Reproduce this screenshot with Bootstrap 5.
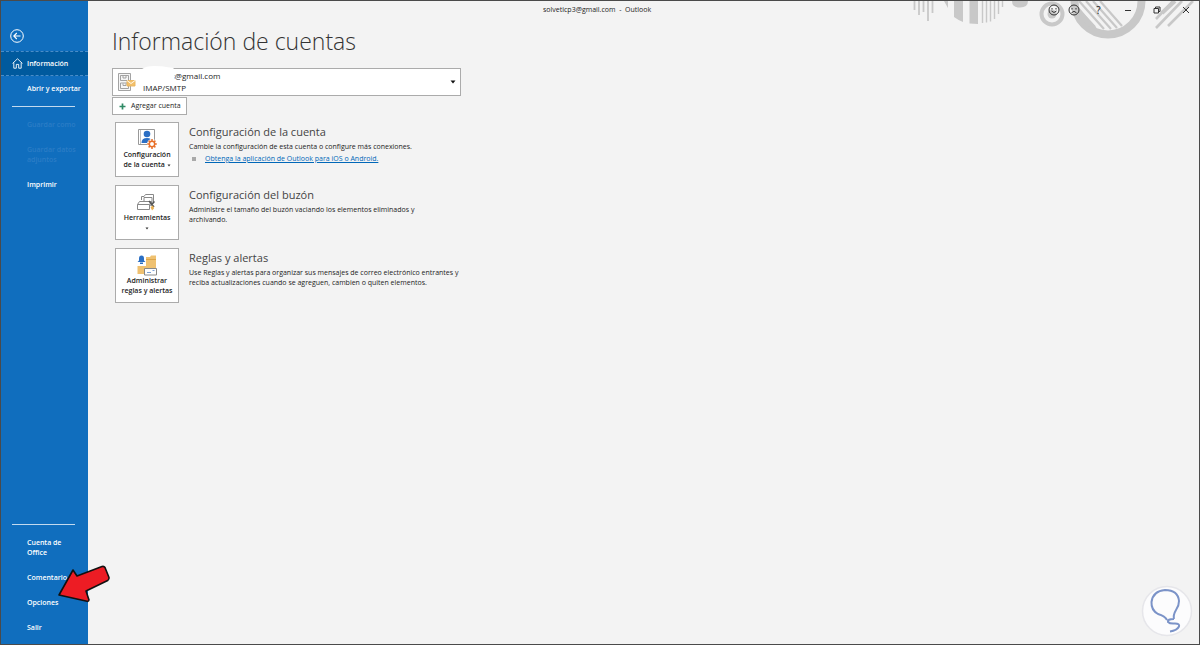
<!DOCTYPE html>
<html lang="es">
<head>
<meta charset="utf-8">
<meta name="viewport" content="width=device-width, initial-scale=1">
<title>Outlook - Información de cuentas</title>
<link href="https://cdn.jsdelivr.net/npm/bootstrap@5.3.0/dist/css/bootstrap.min.css" rel="stylesheet">
<style>
  body { font-family: "Open Sans", "Noto Sans", sans-serif; font-size: 7px; line-height: 10px; color: #1c1c1c; background: #f3f3f3; }
  .app { border: 1px solid #4a4a4a; }
  button { font: inherit; color: inherit; }
  .side { width: 87px; flex: none; background: #106ebe; padding-bottom: 4px; font-weight: 600; }
  .side-link { min-height: 25px; padding-left: 26px; color: #fff; text-decoration: none; white-space: nowrap; }
  .side-link.two-lines { min-height: 35px; }
  .side-link.active { background: #005a9e; border: 1px dashed #4a8dc8; border-width: 1px 0; }
  .side-link.active svg { position: absolute; left: 11px; }
  .side-link.disabled { color: #2b7dc6; pointer-events: none; }
  .side-rule { width: 63px; margin: 5px 0 5px 11px; border-top: 1px solid #fff; opacity: .75; }
  .back { width: 14px; height: 14px; margin: 28px 0 8px 9px; background: none; border: 0; color: #fff; }
  .art { top: 0; right: 0; z-index: 0; }
  .titlebar { height: 18px; z-index: 1; }
  .caption-text { left: 455px; font-weight: 500; }
  .win { gap: 8px; padding-right: 3px; }
  .win button { height: 18px; padding: 0; border: 0; background: none; }
  .w-face { width: 12px; }
  .w-std { width: 21px; }
  .w-help { font-size: 10px; }
  .content { padding: 6px 24px 20px; max-width: 422px; }
  .page-title { font-size: 23px; line-height: 32px; font-weight: 300; margin: 0 0 11px; color: #333; white-space: nowrap; }
  .account { height: 28px; padding: 0 4px; background: #fff; border: 1px solid #ababab; width: 349px; text-align: left; }
  .account-text { font-size: 8px; line-height: 12px; margin-left: 7px; }
  .account-mail { padding-left: 28px; }
  .smudge { left: 29px; top: -3px; z-index: 2; }
  .add { height: 18px; margin-top: 1px; padding: 0 4px 0 6px; gap: 5px; background: #fff; border: 1px solid #ababab; width: 75px; white-space: nowrap; }
  .tiles { padding: 7px 0 0 3px; gap: 8px; }
  .tile { width: 64px; height: 55px; flex: none; padding: 6px 0 0; background: #fff; border: 1px solid #ababab; font-weight: 600; }
  .tile span { white-space: nowrap; }
  .tile-text { margin-left: 10px; }
  .row-title { font-size: 11px; line-height: 14px; margin: 3px 0; font-weight: 400; color: #444; }
  .row-text { white-space: nowrap; }
  .row-link { padding-top: 2px; }
  .bullet { width: 4px; height: 4px; background: #a9a9a9; margin: 0 9px 0 3px; }
  .row-text a { color: #0067b8; }
  .pointer { left: 56px; top: -26px; z-index: 5; pointer-events: none; }
  .bulb { right: 6px; bottom: 7px; width: 52px; height: 52px; }
</style>
</head>
<body>
<div class="app d-flex min-vh-100 position-relative overflow-hidden">
  <nav class="side d-flex flex-column position-relative z-1" aria-label="Archivo">
    <button class="back p-0" aria-label="Atrás">
      <svg class="d-block" width="14" height="14" viewBox="0 0 14 14" fill="none" stroke="currentColor"><circle cx="7" cy="7" r="6.3"/><path d="M10.500 7H4M6.800 4 3.800 7l3 3" stroke-width="1.100"/></svg>
    </button>
    <a class="side-link active d-flex align-items-center position-relative" href="#">
      <svg width="11" height="11" viewBox="0 0 11 11" fill="none" stroke="#fff" stroke-width=".9"><path d="M.6 5.400 5.500.8l4.900 4.600M1.800 4.600v5.600h2.500V6.400h2.400v3.800h2.500V4.600"/></svg>
      Información</a>
    <a class="side-link d-flex align-items-center" href="#">Abrir y exportar</a>
    <div class="side-rule"></div>
    <a class="side-link disabled d-flex align-items-center" href="#" aria-disabled="true">Guardar como</a>
    <a class="side-link two-lines disabled d-flex align-items-center" href="#" aria-disabled="true">Guardar datos<br>adjuntos</a>
    <a class="side-link d-flex align-items-center" href="#">Imprimir</a>
    <div class="side-rule mt-auto"></div>
    <a class="side-link two-lines d-flex align-items-center" href="#">Cuenta de<br>Office</a>
    <a class="side-link d-flex align-items-center" href="#">Comentario</a>
    <div class="position-relative">
      <a class="side-link d-flex align-items-center" href="#">Opciones</a>
      <svg class="pointer position-absolute" width="54" height="42" viewBox="0 0 54 42"><path d="M2 31 16 6l4 6L45 2.500q2-.6 3 1l4 10q.4 2-1.300 3L29 27l3 9q-.2 1.500-2 1.300z" fill="#ed1c24" stroke="#111" stroke-width="1.600" stroke-linejoin="round"/></svg>
    </div>
    <a class="side-link d-flex align-items-center" href="#">Salir</a>
  </nav>

  <div class="flex-grow-1 position-relative">
    <svg class="art position-absolute" width="300" height="50" viewBox="0 0 300 50" fill="none" stroke="#c8c8c8">
      <path d="M15.500 0v9M20 0v14M24.500 0v11M29 0v20M33.500 0v12" stroke-width="1.800"/>
      <path d="M45 0h4v7zM55 0h9v21q-5-2-9-5zM70.500 0h8.500v23l-8.500-.5z" fill="#c8c8c8" stroke="none"/>
      <path d="M83.500 0v22M87.500 0v21.500M91.500 0v20.500M95.500 0v18M99.500 0v13M103.500 0v6" stroke-width="1.400"/>
      <path d="M113 0q0 6.500 8 6.500T129 0z" fill="#c8c8c8" stroke="none"/>
      <circle cx="153" cy="13" r="10.500" stroke-width="4"/><circle cx="153" cy="13" r="4.500" fill="#c8c8c8" stroke="none"/>
      <circle cx="209" cy="0" r="33.500" stroke-width="8"/>
      <path d="M173 0l24 28M180 0l25 28M187 0l25 28M194 0l24 27M201 0l22 25" stroke-width="2.200"/>
      <path d="M177 8l18 19" stroke-width="5"/>
      <path d="M257 18 274 0M257 27 283 0M269 25 294 0" stroke-width="2.600"/>
      <path d="M263 12 276 0" stroke-width="4"/>
    </svg>
    <header class="titlebar d-flex align-items-center position-relative">
      <div class="caption-text position-absolute text-nowrap">solveticp3@gmail.com &nbsp;-&nbsp; Outlook</div>
      <div class="win d-flex ms-auto">
        <button class="w-face" aria-label="Enviar una sonrisa"><svg class="d-block" width="12" height="12" viewBox="0 0 12 12" fill="none" stroke="#333"><circle cx="6" cy="6" r="5"/><path d="M3.500 7q2.500 3 5 0M4 4v1.500M8 4v1.500"/></svg></button>
        <button class="w-face" aria-label="Enviar una cara triste"><svg class="d-block" width="12" height="12" viewBox="0 0 12 12" fill="none" stroke="#333"><circle cx="6" cy="6" r="5"/><path d="M3.500 8.800q2.500-3 5 0M4 4v1.500M8 4v1.500"/></svg></button>
        <button class="w-std w-help" aria-label="Ayuda">?</button>
        <button class="w-std" aria-label="Minimizar"><svg class="d-block mx-auto" width="8" height="8" viewBox="0 0 8 8" stroke="#333"><path d="M1 4.500h6"/></svg></button>
        <button class="w-std" aria-label="Restaurar"><svg class="d-block mx-auto" width="8" height="8" viewBox="0 0 8 8" fill="none" stroke="#333"><path d="M1 2.500h4.500V7H1zM2.500 2.500V1H7v4.500H5.500"/></svg></button>
        <button class="w-std" aria-label="Cerrar"><svg class="d-block mx-auto" width="8" height="8" viewBox="0 0 8 8" stroke="#333"><path d="M1 1l6 6M7 1 1 7"/></svg></button>
      </div>
    </header>

    <main class="content position-relative">
      <h1 class="page-title">Información de cuentas</h1>
      <div class="position-relative">
        <button class="account d-flex align-items-center" aria-haspopup="listbox">
          <svg width="19" height="20" viewBox="0 0 19 20" fill="#f6f6f6" stroke="#999" stroke-width=".9"><path d="M1.500 1.500h12v17h-12z"/><path d="M3.500 3.500h8v5h-8zM3.500 11h8v5.500h-8zM6 4v2h3V4M6 11.500v2h3v-2"/><path d="M10 8.500h8v5.500h-8z" fill="#f3c06b" stroke="#e9b45c"/><path d="m10 8.500 4 3 4-3" fill="none" stroke="#fff"/></svg>
          <span class="account-text"><span class="account-mail d-block">s@gmail.com</span><span class="d-block">IMAP/SMTP</span></span>
          <svg class="ms-auto" width="6" height="4" viewBox="0 0 6 4"><path d="M.5.5h5L3 3.500z" fill="#111"/></svg>
        </button>
        <svg class="smudge position-absolute" width="36" height="17" viewBox="0 0 36 17"><path d="M1 4Q5 1 13 1t12 1l8 1q-3 2 0 6 1 4 0 7H2Q0 9 1 4z" fill="#fff"/></svg>
      </div>
      <button class="add d-flex align-items-center">
        <svg width="7" height="7" viewBox="0 0 7 7" stroke="#2f8a65" stroke-width="1.700"><path d="M3.500.5v6M.5 3.500h6"/></svg>Agregar cuenta
      </button>

      <div class="tiles d-flex flex-column">
        <section class="d-flex">
          <button class="tile d-flex flex-column align-items-center">
            <svg width="22" height="21" viewBox="0 0 22 21"><path d="M2.500.5h16v15h-16z" fill="#fff" stroke="#999"/><path d="M4.500.5v15" stroke="#999" stroke-width=".6"/><circle cx="11" cy="5" r="3.300" fill="#2b6fc4"/><path d="M5.500 14q0-5 5.500-5t4 5z" fill="#2b6fc4"/><circle cx="16" cy="15" r="5" fill="#fff"/><circle cx="16" cy="15" r="2.700" fill="#fff" stroke="#e8702a" stroke-width="1.500"/><path d="M16 10v2M16 18v2M11.200 15h2M18.800 15h2M12.600 11.600l1.400 1.400M18 17l1.400 1.400M12.600 18.400 14 17M18 13l1.400-1.400" stroke="#e8702a" stroke-width="1.500"/></svg>
            <span>Configuración</span><span>de la cuenta <svg width="4" height="3" viewBox="0 0 4 3"><path d="M.5.5h3L2 2.500z" fill="#333"/></svg></span>
          </button>
          <div class="tile-text">
            <h2 class="row-title">Configuración de la cuenta</h2>
            <div class="row-text">Cambie la configuración de esta cuenta o configure más conexiones.</div>
            <div class="row-text row-link d-flex align-items-center"><i class="bullet"></i><a href="#">Obtenga la aplicación de Outlook para iOS o Android.</a></div>
          </div>
        </section>
        <section class="d-flex">
          <button class="tile d-flex flex-column align-items-center">
            <svg width="22" height="21" viewBox="0 0 22 21" fill="#fff" stroke="#888"><path d="M5.500 8V4.500H8L9.500 2.500h8v9"/><path d="M8 5.500h8v5H8z"/><path d="m3.500 9.500-2 3v5h12v-5l2-3z"/><path d="M1.500 12.500h12" fill="none"/><path d="m13 9 5 6M18.500 9.500l-4 4" stroke="#555" stroke-width="1.500"/><path d="m14.500 15 2.500-1.500 1 3-2 2z" fill="#e9b052" stroke="none"/></svg>
            <span>Herramientas</span><svg class="mt-1" width="4" height="3" viewBox="0 0 4 3"><path d="M.5.5h3L2 2.500z" fill="#333"/></svg>
          </button>
          <div class="tile-text">
            <h2 class="row-title">Configuración del buzón</h2>
            <div class="row-text">Administre el tamaño del buzón vaciando los elementos eliminados y<br>archivando.</div>
          </div>
        </section>
        <section class="d-flex">
          <button class="tile d-flex flex-column align-items-center">
            <svg width="22" height="21" viewBox="0 0 22 21"><path d="M10 2h4l1-1.500h5V13h-10zM1.500 11h9v8h-9z" fill="#efc171"/><path d="M10 4.500h10" stroke="#dda548"/><path d="M3 3.500Q3 .5 5.500.5T8 3.500v2L9.500 7h-8L3 5.500z" fill="#2b6fc4"/><path d="M4 7.500h3v1.500H4z" fill="#2b6fc4"/><path d="M8.500 13.500h12v6.500h-12z" fill="#fff" stroke="#888"/><path d="M11 17.500h4M16.500 15.500h2" stroke="#6d95cf" stroke-width=".9"/></svg>
            <span>Administrar</span><span>reglas y alertas</span>
          </button>
          <div class="tile-text">
            <h2 class="row-title">Reglas y alertas</h2>
            <div class="row-text">Use Reglas y alertas para organizar sus mensajes de correo electrónico entrantes y<br>reciba actualizaciones cuando se agreguen, cambien o quiten elementos.</div>
          </div>
        </section>
      </div>
    </main>
  </div>

  <svg class="bulb position-absolute" viewBox="0 0 52 52" fill="none"><circle cx="26" cy="26" r="24.500" fill="#fcfcfd" stroke="#e6e6ea" stroke-width="1.500"/><path d="M26 35Q24 31 17 29 10 25 10.500 17 12 6 24 5q13 0 14 11 0 5-3 9-3 5-2 9M33 34q-7 0-6 3 2 2 7 1.500 5 0 4 3-2 4-9 5" stroke="#7b93c8" stroke-width="2"/></svg>
</div>
<script src="https://cdn.jsdelivr.net/npm/bootstrap@5.3.0/dist/js/bootstrap.bundle.min.js"></script>
</body>
</html>
